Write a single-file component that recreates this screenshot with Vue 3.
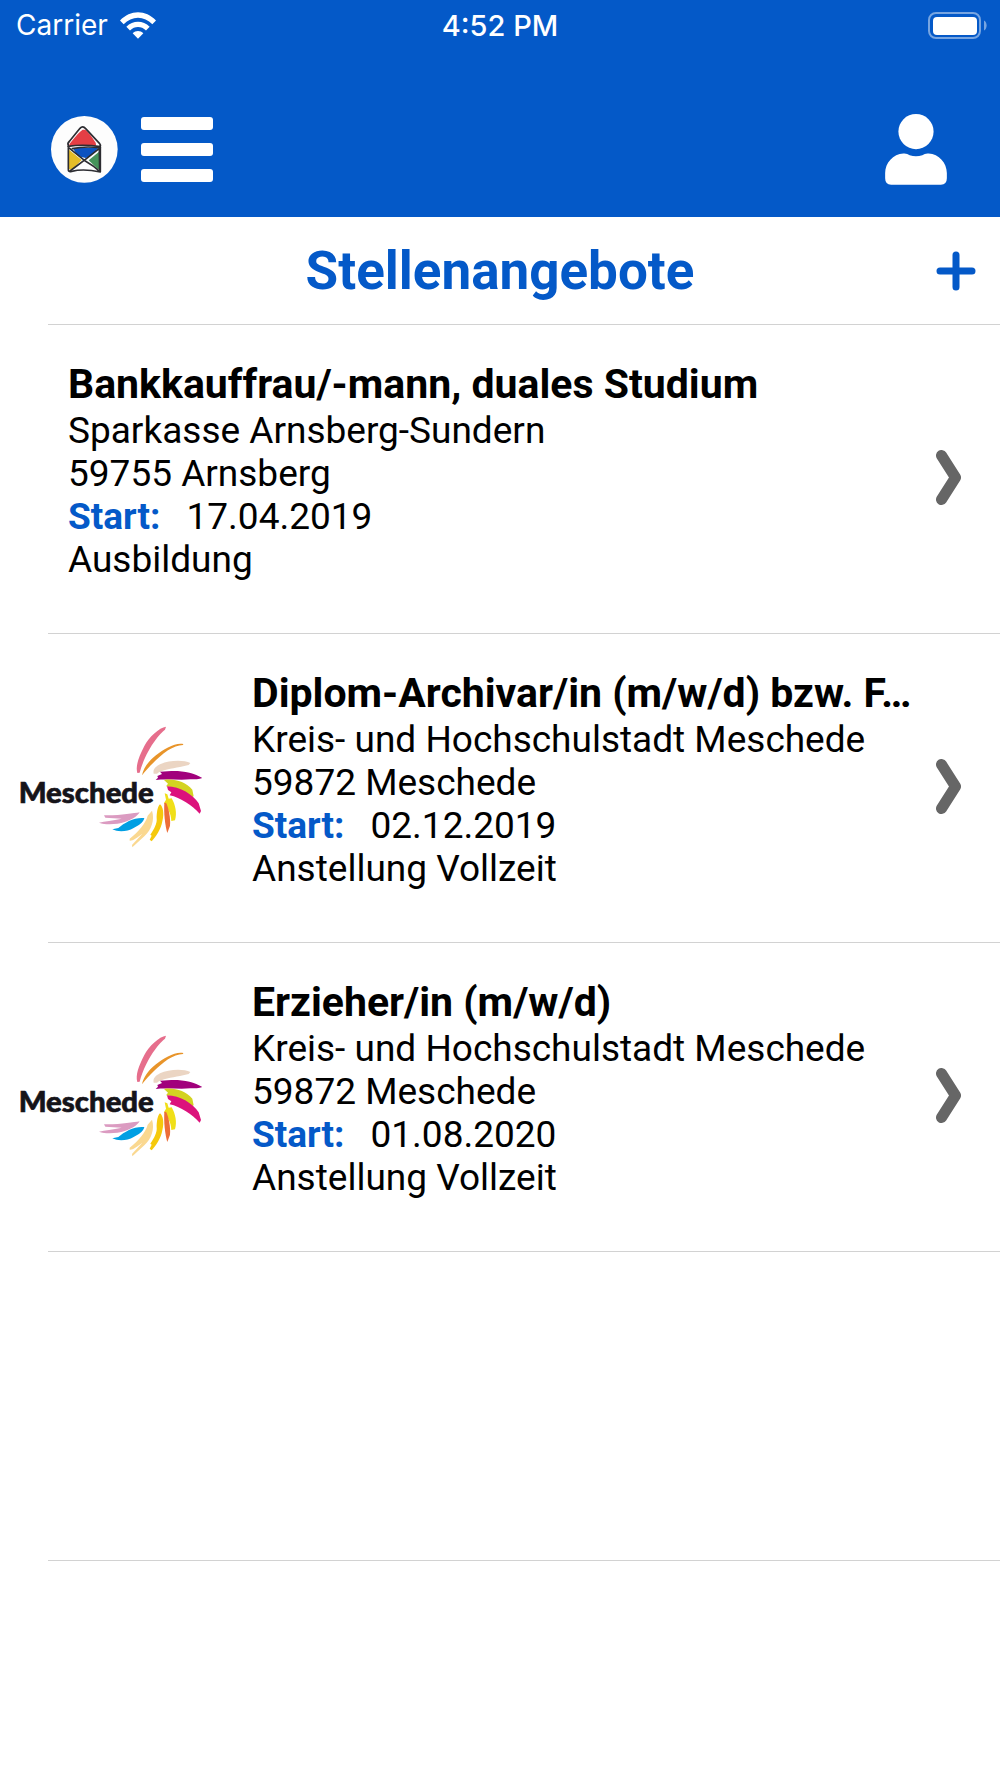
<template>
  <div class="app">
    <header class="app-header">
      <div class="status-bar">
        <div class="status-left">
          <span>Carrier</span>
          <svg class="wifi-icon" viewBox="0 0 108 80" aria-hidden="true">
            <path d="M0 25C31-8 77-8 108 25L97 36C73 10 35 10 11 36Z" />
            <path d="M19 44C39 24 69 24 89 44L78 55C64 41 44 41 30 55Z" />
            <path d="M38 63C47 54 61 54 70 63L54 80Z" />
          </svg>
        </div>
        <span class="status-time">4:52 PM</span>
        <div class="status-right">
          <svg class="battery-icon" viewBox="0 0 59 27" aria-hidden="true">
            <rect class="battery-frame" x="1" y="1" width="51" height="25" rx="7" />
            <rect x="5" y="5" width="44" height="18" rx="4" />
            <path class="battery-nub" d="M56 8.500C59.500 10 59.500 17 56 18.500Z" />
          </svg>
        </div>
      </div>
      <nav class="toolbar">
        <button type="button" class="icon-btn" aria-label="Startseite">
          <svg class="logo-icon" viewBox="0 0 201 201">
            <circle class="logo-disc" cx="100" cy="100" r="100" />
            <path class="logo-red" d="M95 41Q86 45 56 83Q52 91 60 91Q98 83 133 91Q137 88 134 80Q115 50 103 41Z" />
            <path class="logo-blue" d="M65 96L142 95Q125 119 104 126Q88 124 76 113Z" />
            <path class="logo-yellow" d="M54 101L92 132L63 162L53 159Z" />
            <path class="logo-green" d="M146 106L113 133L140 159L147 160Z" />
            <path class="logo-line" d="M52 88Q48 82 56 75L87 37Q95 28 104 38L146 83Q151 90 146 91" />
            <path class="logo-line" d="M51 91Q97 84 148 92L148 168Q98 157 62 166Q51 169 52 160L52 94L104 136Q127 149 147 167" />
            <path class="logo-line" d="M148 95Q105 130 57 165M64 98Q100 90 145 95M145 94L146 164" />
          </svg>
        </button>
        <button type="button" class="icon-btn" aria-label="Menü">
          <svg class="menu-icon" viewBox="0 0 72 66">
            <rect width="72" height="13" rx="3" />
            <rect y="26" width="72" height="13" rx="3" />
            <rect y="52" width="72" height="13" rx="3" />
          </svg>
        </button>
        <button type="button" class="icon-btn user-btn" aria-label="Profil">
          <svg class="user-icon" viewBox="0 0 186 214">
            <circle cx="93" cy="53" r="53" />
            <path d="M55 119Q66 118 74 124Q93 130 112 124Q120 118 131 119C162 120 186 148 186 178V194Q186 213 168 213H18Q0 213 0 194V178C0 148 24 120 55 119Z" />
          </svg>
        </button>
      </nav>
    </header>

    <main>
      <div class="page-title">
        <h1>Stellenangebote</h1>
        <button type="button" class="icon-btn" aria-label="Hinzufügen">
          <svg class="plus-icon" viewBox="0 0 40 40">
            <path d="M20 4V36M4 20H36" />
          </svg>
        </button>
      </div>

      <ul class="job-list">
        <li v-for="job in jobs" :key="job.id">
          <a href="#" class="job" @click.prevent>
            <div v-if="job.hasLogo" class="job-logo">
              <svg viewBox="54 44 558 372" role="img" aria-label="Meschede">
                <text class="brand-name" x="56" y="277">Meschede</text>
                <path fill="#e66e8c" d="M498 49C478 51 446 81 433 107C416 140 406 167 412 188L419 187C427 155 447 115 466 90C475 76 488 63 495 58Z" />
                <path fill="#e8942a" d="M550 101C526 96 492 115 466 136C444 154 430 174 426 195C446 170 474 141 504 120C519 110 535 105 549 104Z" />
                <path fill="#ebd5c3" d="M571 158C550 148 505 150 480 162C467 169 458 177 461 190L471 190C485 178 515 175 540 170L566 164Z" />
                <path fill="#a1007c" d="M607 203C584 188 550 181 514 182L480 184L486 191L472 197L474 202L467 209C496 205 540 210 571 207C584 206 598 208 607 203Z" />
                <path fill="#d3d321" d="M492 209C523 204 557 215 577 238L581 258L572 263C550 240 527 231 498 228L504 220Z" />
                <path fill="#dc127c" d="M501 228C541 229 579 253 596 279L603 302L599 310C576 285 542 262 509 255L514 246L504 239Z" />
                <path fill="#f0df18" d="M494 249L502 252L506 265L515 264C526 283 532 309 525 330L514 332C513 306 502 294 492 278L498 268Z" />
                <path fill="#ed6e38" d="M498 277C506 291 512 323 510 346L502 368C495 346 491 307 493 278Z" />
                <path fill="#f5c90c" d="M480 282C489 288 493 310 487 333C483 357 467 380 455 393L449 388L455 376L451 373C463 356 472 338 470 324C470 310 472 289 480 282Z" />
                <path fill="#fad890" d="M456 301C465 328 454 359 433 378L397 411L396 404L427 370C413 381 398 392 389 391L389 385C416 364 438 337 443 316Z" />
                <path fill="#db9bc1" d="M419 306C400 309 361 316 312 315L316 322L365 325C337 331 315 333 297 337C319 345 352 342 374 335C392 329 410 321 419 306Z" />
                <path fill="#009fe3" d="M433 323C404 320 374 336 355 353L337 357C355 366 382 364 401 353C415 346 431 336 433 323Z" />
              </svg>
            </div>
            <div class="job-info">
              <h2>{{ job.title }}</h2>
              <p>{{ job.company }}</p>
              <p>{{ job.city }}</p>
              <p><strong>Start:</strong>{{ job.start }}</p>
              <p>{{ job.type }}</p>
            </div>
            <svg class="arrow-icon" viewBox="0 0 26 56" aria-hidden="true">
              <path d="M5.500 5.500L19.500 27.500L5.500 49.500" />
            </svg>
          </a>
        </li>
        <li class="empty-row"></li>
      </ul>
    </main>
  </div>
</template>

<script setup>
import { ref } from 'vue';

const jobs = ref([
  {
    id: 1,
    title: 'Bankkauffrau/-mann, duales Studium',
    company: 'Sparkasse Arnsberg-Sundern',
    city: '59755 Arnsberg',
    start: '17.04.2019',
    type: 'Ausbildung',
    hasLogo: false
  },
  {
    id: 2,
    title: 'Diplom-Archivar/in (m/w/d) bzw. F…',
    company: 'Kreis- und Hochschulstadt Meschede',
    city: '59872 Meschede',
    start: '02.12.2019',
    type: 'Anstellung Vollzeit',
    hasLogo: true
  },
  {
    id: 3,
    title: 'Erzieher/in (m/w/d)',
    company: 'Kreis- und Hochschulstadt Meschede',
    city: '59872 Meschede',
    start: '01.08.2020',
    type: 'Anstellung Vollzeit',
    hasLogo: true
  }
]);
</script>

<style>
body {
  margin: 0;
  background: #fff;
}
</style>

<style scoped>
.app {
  min-height: 100vh;
  background: #fff;
  color: #000;
  font-family: Roboto, "Liberation Sans", sans-serif;
}

.app-header {
  background: #0459c8;
  color: #fff;
}

.status-bar {
  display: grid;
  grid-template-columns: 1fr auto 1fr;
  align-items: center;
  height: 50px;
  padding: 0 13px;
  font-family: Inter, sans-serif;
  font-size: 28px;
}

.status-left {
  display: flex;
  align-items: center;
  gap: 12px;
  padding-left: 3px;
}

.status-time {
  font-size: 29px;
  font-weight: 500;
}

.status-right {
  display: flex;
  justify-content: flex-end;
}

.wifi-icon {
  width: 36px;
  height: 27px;
  fill: #fff;
}

.battery-icon {
  width: 59px;
  height: 27px;
  fill: #fff;
}

.battery-frame {
  fill: none;
  stroke: #77a5e1;
  stroke-width: 2;
}

.battery-nub {
  fill: #77a5e1;
}

.toolbar {
  display: flex;
  align-items: center;
  gap: 23px;
  padding: 64px 53px 32px 51px;
}

.icon-btn {
  display: flex;
  padding: 0;
  border: none;
  background: none;
  cursor: pointer;
}

.user-btn {
  margin-left: auto;
}

.logo-icon {
  width: 67px;
  height: 67px;
}

.logo-disc {
  fill: #fdfdfd;
}

.logo-red {
  fill: #e43e45;
}

.logo-blue {
  fill: #0c52c0;
}

.logo-yellow {
  fill: #e6bd27;
}

.logo-green {
  fill: #45935a;
}

.logo-line {
  fill: none;
  stroke: #2d2d32;
  stroke-width: 5;
  stroke-linecap: round;
  stroke-linejoin: round;
}

.menu-icon {
  width: 72px;
  height: 66px;
  fill: #fff;
}

.user-icon {
  width: 62px;
  height: 71px;
  fill: #fff;
}

.page-title {
  display: grid;
  grid-template-columns: 1fr auto 1fr;
  align-items: center;
  height: 107px;
  padding: 0 24px;
}

.page-title h1 {
  grid-column: 2;
  margin: 0;
  color: #0459c8;
  font-size: 53px;
  line-height: 62px;
  font-weight: 700;
}

.page-title .icon-btn {
  justify-self: end;
}

.plus-icon {
  width: 40px;
  height: 40px;
  fill: none;
  stroke: #0459c8;
  stroke-width: 7;
  stroke-linecap: round;
}

.job-list {
  margin: 0;
  padding: 0;
  list-style: none;
}

/* separator starts to the right of the screen edge */
.job-list::before,
.job-list li::after {
  content: "";
  display: block;
  height: 1px;
  margin-left: 48px;
  background: #d2d2d2;
}

.job {
  display: flex;
  align-items: center;
  padding: 0 38px 3px 18px;
  color: inherit;
  text-decoration: none;
}

.job-logo {
  flex: none;
  width: 186px;
}

.job-logo svg {
  display: block;
  width: 100%;
}

.brand-name {
  fill: #15141a;
  stroke: #15141a;
  stroke-width: 2;
  font-family: Lato, sans-serif;
  font-size: 88px;
  font-weight: 900;
}

.job-info {
  flex: 1;
  min-width: 0;
  padding: 34px 8px 49px 50px;
}

.job-logo + .job-info {
  padding-left: 48px;
}

.job-info h2 {
  margin: 0;
  overflow: hidden;
  font-size: 41px;
  line-height: 50px;
  font-weight: 700;
  text-overflow: ellipsis;
  white-space: nowrap;
}

.job-info p {
  margin: 0;
  font-size: 37px;
  line-height: 43px;
}

.job-info strong {
  margin-right: 26px;
  color: #0459c8;
}

.arrow-icon {
  flex: none;
  width: 26px;
  height: 56px;
  fill: none;
  stroke: #666;
  stroke-width: 11;
  stroke-linecap: round;
  stroke-linejoin: round;
}

.empty-row {
  padding-top: 308px;
}
</style>
